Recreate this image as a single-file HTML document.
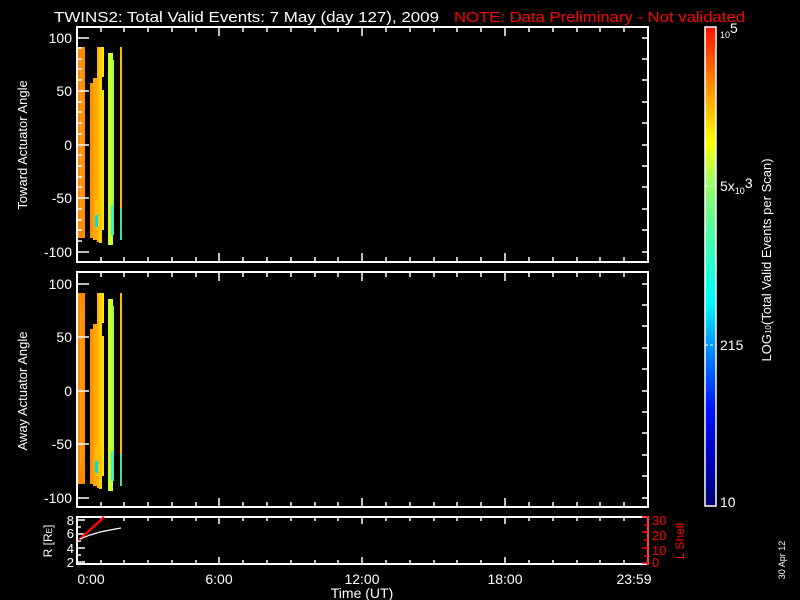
<!DOCTYPE html>
<html><head><style>
html,body{margin:0;padding:0;background:#000;width:800px;height:600px;overflow:hidden}
svg text{font-family:"Liberation Sans",sans-serif;}
</style></head><body>
<svg width="800" height="600" xmlns="http://www.w3.org/2000/svg">
<defs>
<linearGradient id="cb" x1="0" y1="1" x2="0" y2="0">
<stop offset="0" stop-color="#000070"/>
<stop offset="0.08" stop-color="#0000b0"/>
<stop offset="0.2" stop-color="#0010ff"/>
<stop offset="0.33" stop-color="#0090ff"/>
<stop offset="0.43" stop-color="#00ffff"/>
<stop offset="0.55" stop-color="#40ffb0"/>
<stop offset="0.68" stop-color="#a0ff60"/>
<stop offset="0.76" stop-color="#ffff00"/>
<stop offset="0.86" stop-color="#ffa000"/>
<stop offset="1" stop-color="#ff1000"/>
</linearGradient>
<g id="bars">
<rect x="78" y="47" width="7" height="191" fill="#ff8c00"/>
<rect x="80" y="60" width="3" height="160" fill="#ff9a10" opacity="0.7"/>
<rect x="90" y="83" width="3" height="155" fill="#ff9000"/>
<rect x="93" y="78" width="4" height="162" fill="#ffa800"/>
<rect x="97" y="47" width="2" height="195" fill="#ffb000"/>
<rect x="99" y="47" width="3" height="196" fill="#ffd000"/>
<rect x="102" y="47" width="2" height="30" fill="#ffe800"/>
<rect x="102" y="90" width="2" height="140" fill="#ffe000"/>
<rect x="95" y="200" width="6" height="30" fill="#ffc000"/>
<rect x="95" y="215" width="3" height="12" fill="#00e0e0"/>
<rect x="108" y="53" width="5" height="192" fill="#c8ff30"/>
<rect x="112" y="60" width="2" height="175" fill="#a0ff40"/>
<rect x="111" y="205" width="3" height="30" fill="#40f0c0"/>
<rect x="120" y="47" width="2" height="161" fill="#ffb800"/>
<rect x="120" y="208" width="2" height="32" fill="#40e0a0"/>
</g>
</defs>
<text x="54" y="22" font-size="15" fill="#fff" textLength="385" lengthAdjust="spacingAndGlyphs">TWINS2: Total Valid Events:  7 May (day 127), 2009</text>
<text x="454" y="22" font-size="15" fill="#f00" textLength="291" lengthAdjust="spacingAndGlyphs">NOTE: Data Preliminary - Not validated</text>

<use href="#bars"/>
<rect x="77" y="27" width="571" height="235" fill="none" stroke="#fff" stroke-width="2"/>
<use href="#bars" y="246"/>
<rect x="77" y="272" width="571" height="235" fill="none" stroke="#fff" stroke-width="2"/>
<g stroke="#fff" stroke-width="1.5">
<path d="M77 38h12M77 91h12M77 145h12M77 198h12M77 252h12M77 284h12M77 337h12M77 391h12M77 444h12M77 498h12"/>
<path d="M77 48h5M77 59h5M77 69h5M77 80h5M77 102h5M77 112h5M77 123h5M77 134h5M77 155h5M77 166h5M77 177h5M77 187h5M77 209h5M77 220h5M77 230h5M77 241h5"/>
<path d="M648 38h-6M648 59h-6M648 80h-6M648 102h-6M648 123h-6M648 145h-6M648 166h-6M648 187h-6M648 209h-6M648 230h-6M648 252h-6"/>
<path d="M648 284h-6M648 305h-6M648 326h-6M648 348h-6M648 369h-6M648 391h-6M648 412h-6M648 433h-6M648 455h-6M648 476h-6M648 498h-6"/>
<path d="M101 27v5M124 27v5M148 27v5M172 27v5M196 27v5M219 27v9M243 27v5M267 27v5M291 27v5M315 27v5M338 27v5M362 27v9M386 27v5M410 27v5M434 27v5M457 27v5M481 27v5M505 27v9M529 27v5M553 27v5M577 27v5M600 27v5M624 27v5"/>
<path d="M101 262v-5M124 262v-5M148 262v-5M172 262v-5M196 262v-5M219 262v-9M243 262v-5M267 262v-5M291 262v-5M315 262v-5M338 262v-5M362 262v-9M386 262v-5M410 262v-5M434 262v-5M457 262v-5M481 262v-5M505 262v-9M529 262v-5M553 262v-5M577 262v-5M600 262v-5M624 262v-5"/>
<path d="M101 272v5M124 272v5M148 272v5M172 272v5M196 272v5M219 272v9M243 272v5M267 272v5M291 272v5M315 272v5M338 272v5M362 272v9M386 272v5M410 272v5M434 272v5M457 272v5M481 272v5M505 272v9M529 272v5M553 272v5M577 272v5M600 272v5M624 272v5"/>
<path d="M101 507v-5M124 507v-5M148 507v-5M172 507v-5M196 507v-5M219 507v-9M243 507v-5M267 507v-5M291 507v-5M315 507v-5M338 507v-5M362 507v-9M386 507v-5M410 507v-5M434 507v-5M457 507v-5M481 507v-5M505 507v-9M529 507v-5M553 507v-5M577 507v-5M600 507v-5M624 507v-5"/>
</g>
<g font-size="14" fill="#fff" text-anchor="end">
<text x="72" y="43">100</text><text x="72" y="96">50</text><text x="72" y="150">0</text><text x="72" y="203">-50</text><text x="72" y="257">-100</text>
<text x="72" y="289">100</text><text x="72" y="342">50</text><text x="72" y="396">0</text><text x="72" y="449">-50</text><text x="72" y="503">-100</text>
</g>
<text transform="translate(27,145) rotate(-90)" font-size="13" fill="#fff" text-anchor="middle">Toward Actuator Angle</text>
<text transform="translate(27,391) rotate(-90)" font-size="13" fill="#fff" text-anchor="middle">Away Actuator Angle</text>

<rect x="77" y="517" width="571" height="47" fill="none" stroke="#fff" stroke-width="2"/>
<g stroke="#fff" stroke-width="1.5">
<path d="M77 520h8M77 527h4M77 534h8M77 541h4M77 548h8M77 555h4M77 562h8"/>
<path d="M101 517v4M124 517v4M148 517v4M172 517v4M196 517v4M219 517v7M243 517v4M267 517v4M291 517v4M315 517v4M338 517v4M362 517v7M386 517v4M410 517v4M434 517v4M457 517v4M481 517v4M505 517v7M529 517v4M553 517v4M577 517v4M600 517v4M624 517v4"/>
<path d="M101 564v-4M124 564v-4M148 564v-4M172 564v-4M196 564v-4M219 564v-7M243 564v-4M267 564v-4M291 564v-4M315 564v-4M338 564v-4M362 564v-7M386 564v-4M410 564v-4M434 564v-4M457 564v-4M481 564v-4M505 564v-7M529 564v-4M553 564v-4M577 564v-4M600 564v-4M624 564v-4"/>
</g>
<g stroke="#f00" stroke-width="1.5"><path d="M648 517h-6M648 525h-4M648 532h-6M648 540h-4M648 548h-6M648 556h-4M648 563h-6"/><path d="M648 516v49"/></g>
<path d="M79 540L104 517" stroke="#f00" stroke-width="2.5" fill="none"/>
<path d="M80 539L90 535L100 532L110 530L121 528" stroke="#fff" stroke-width="1.2" fill="none"/>
<g font-size="13" fill="#fff" text-anchor="end">
<text x="74" y="525">8</text><text x="74" y="538">6</text><text x="74" y="553">4</text><text x="74" y="567">2</text>
</g>
<g font-size="13" fill="#f00">
<text x="652" y="525">30</text><text x="652" y="540">20</text><text x="652" y="555">10</text><text x="652" y="567">0</text>
</g>
<text transform="translate(52,541) rotate(-90)" font-size="12" fill="#fff" text-anchor="middle">R [R<tspan font-size="8">E</tspan>]</text>
<text transform="translate(684,541) rotate(-90)" font-size="12" fill="#f00" text-anchor="middle">L Shell</text>
<g font-size="14" fill="#fff" text-anchor="middle">
<text x="91" y="584">0:00</text><text x="219" y="584">6:00</text><text x="362" y="584">12:00</text><text x="505" y="584">18:00</text><text x="634" y="584">23:59</text>
<text x="362" y="598">Time (UT)</text>
</g>
<text transform="translate(785,560) rotate(-90)" font-size="9" fill="#fff" text-anchor="middle">30 Apr 12</text>

<rect x="705" y="27" width="11" height="479" fill="url(#cb)" stroke="#fff" stroke-width="1.5"/>
<path d="M705 186h11M705 345h11" stroke="#fff" stroke-dasharray="3,2"/>
<g font-size="14" fill="#fff">
<text x="720" y="38"><tspan font-size="9">10</tspan><tspan dy="-5">5</tspan></text>
<text x="720" y="191">5x<tspan font-size="9" dy="3">10</tspan><tspan dy="-6">3</tspan></text>
<text x="720" y="350">215</text>
<text x="720" y="507">10</text>
</g>
<text transform="translate(771,260) rotate(-90)" font-size="13" fill="#fff" text-anchor="middle">LOG<tspan font-size="8">10</tspan>(Total Valid Events per Scan)</text>
</svg>
</body></html>
